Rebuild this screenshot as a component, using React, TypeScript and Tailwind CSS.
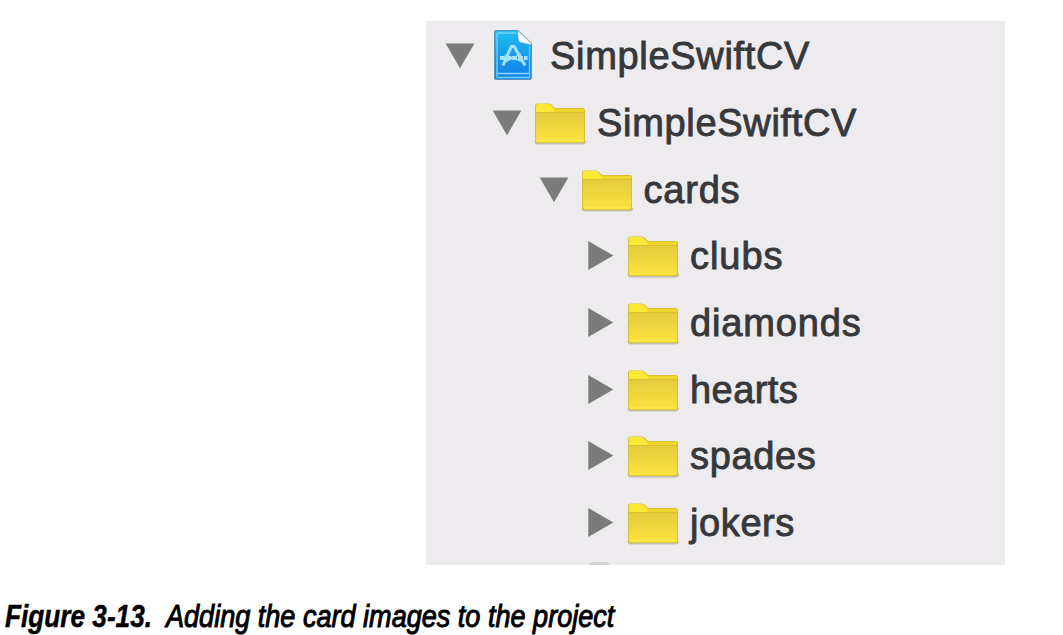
type Item = {
  label: string;
  indent: string;
  tracking: string;
  open?: boolean;
  project?: boolean;
};

const items: Item[] = [
  { label: "SimpleSwiftCV", indent: "pl-[19px]", tracking: "tracking-[0.68px]", open: true, project: true },
  { label: "SimpleSwiftCV", indent: "pl-[66px]", tracking: "tracking-[0.68px]", open: true },
  { label: "cards", indent: "pl-[112.500px]", tracking: "tracking-[0.8px]", open: true },
  { label: "clubs", indent: "pl-[159px]", tracking: "tracking-[0.95px]" },
  { label: "diamonds", indent: "pl-[159px]", tracking: "tracking-[0.85px]" },
  { label: "hearts", indent: "pl-[159px]", tracking: "tracking-[0.45px]" },
  { label: "spades", indent: "pl-[159px]", tracking: "tracking-[0.65px]" },
  { label: "jokers", indent: "pl-[159px]", tracking: "tracking-[0.6px]" },
];

function Disclosure({ open }: { open?: boolean }) {
  return (
    <svg className="h-[30px] w-[30px] shrink-0" viewBox="0 0 30 30" fill="#7b7b7c">
      {open ? <path d="M0.700 3.600H29.400L15 28.300Z" /> : <path d="M3.300 0.900V30L28.300 15.400Z" />}
    </svg>
  );
}

function Folder() {
  return (
    <svg className="mt-[2px] ml-[11px] h-[46px] w-[54px] shrink-0" viewBox="0 0 54 46">
      <defs>
        <linearGradient id="folderFront" x1="0" y1="0" x2="0" y2="1">
          <stop offset="0" stopColor="#e5cb3d" />
          <stop offset="0.35" stopColor="#ebd33f" />
          <stop offset="0.8" stopColor="#f8dd3d" />
          <stop offset="1" stopColor="#fbe33f" />
        </linearGradient>
      </defs>
      <path d="M2.500 41Q2.500 43.500 5 43.500H49.500Q52 43.500 52 41" fill="none" stroke="#a29a72" strokeOpacity="0.55" strokeWidth="2" />
      <path d="M2 6Q2 3.400 4.500 3.400H15.500Q17.500 3.400 19 5L22 8H49.800Q52 8 52 10.300V41Q52 43 50 43H4Q2 43 2 41Z" fill="#d9be37" />
      <path d="M3 6Q3 4 5 4H15.300Q17 4 18.500 5.800L21.500 9H49Q51 9 51 11V15H3Z" fill="#fbea35" />
      <path d="M21.500 9H49Q51 9 51 11V13H21.500Z" fill="#f0d52f" />
      <path d="M3 12H51V40.500Q51 42.300 49 42.300H5Q3 42.300 3 40.500Z" fill="url(#folderFront)" />
      <path d="M3 12.500H51" stroke="#d9bd35" strokeWidth="1.200" />
      <path d="M4 40.500H50" stroke="#ffe947" strokeWidth="1.300" />
    </svg>
  );
}

function ProjectIcon() {
  return (
    <svg className="ml-[16px] h-[54px] w-[44px] shrink-0" viewBox="0 0 44 54">
      <defs>
        <linearGradient id="docBlue" x1="0" y1="0" x2="0" y2="1">
          <stop offset="0" stopColor="#23bdf3" />
          <stop offset="0.5" stopColor="#159bea" />
          <stop offset="1" stopColor="#1480e8" />
        </linearGradient>
      </defs>
      <path d="M5 2H27L41 15V50Q41 52 39 52H6Q3 52 3 50V4Q3 2 5 2Z" fill="#5896bd" />
      <path d="M6 3H26.500L40 16V48.500Q40 51 38 51H6.500Q4 51 4 48.500V5Q4 3 6 3Z" fill="url(#docBlue)" />
      <path d="M6 5H25M6 5V49.500H38.500V18" fill="none" stroke="#70d2fb" strokeWidth="1.300" />
      <path d="M5.500 45.500H39" stroke="#8fd4fb" strokeWidth="1.500" />
      <path d="M27 3L40.500 15.500L39 16.500L28.500 14Q26.500 10 27 3Z" fill="#fafafa" stroke="#a9bdc9" strokeWidth="0.600" />
      <g fill="none" stroke="#a6e0fd">
        <path d="M20.500 18L12 37.500M23 18L34 37.500" strokeWidth="3" />
        <path d="M19.500 18.500H24" strokeWidth="3" />
        <path d="M9 30H36.500" strokeWidth="4" strokeDasharray="5 1" />
        <path d="M14 27L31 33.500M15 33.500L30 26" strokeWidth="1.500" />
      </g>
    </svg>
  );
}

function Row({ item }: { item: Item }) {
  return (
    <li className={`flex h-[66.7px] shrink-0 items-center ${item.indent}`}>
      <Disclosure open={item.open} />
      {item.project ? <ProjectIcon /> : <Folder />}
      <span
        className={`${item.project ? "ml-[15px]" : "ml-[10px]"} ${item.tracking} pt-[2px] text-[38px] leading-[44px] whitespace-nowrap [-webkit-text-stroke:0.9px_#36383b]`}
      >
        {item.label}
      </span>
    </li>
  );
}

export default function App() {
  return (
    <main className="flex h-[635px] w-[1063px] flex-col overflow-hidden bg-white pt-[21px] font-['Liberation_Sans',Arial,sans-serif]">
      <section className="ml-[426px] flex h-[544px] w-[579px] shrink-0 flex-col overflow-hidden bg-[#edebee] text-[#36383b]">
        <ul className="flex flex-col pt-px">
          {items.map((item, i) => (
            <Row key={i} item={item} />
          ))}
        </ul>
        <div className="mt-[6px] ml-[161px] h-[12px] w-[24px] shrink-0 rounded-t-[6px] bg-[#d3d2d4]" />
      </section>
      <p className="mt-[35px] flex h-[34px] shrink-0 pl-[5px] text-[31px] leading-[34px] whitespace-pre text-black italic">
        <span className="w-[161px] shrink-0">
          <b className="inline-block origin-left scale-x-[0.845] [-webkit-text-stroke:0.5px_#000]">Figure 3-13.</b>
        </span>
        <span className="inline-block origin-left scale-x-[0.873] [-webkit-text-stroke:1px_#000]">
          Adding the card images to the project
        </span>
      </p>
    </main>
  );
}
